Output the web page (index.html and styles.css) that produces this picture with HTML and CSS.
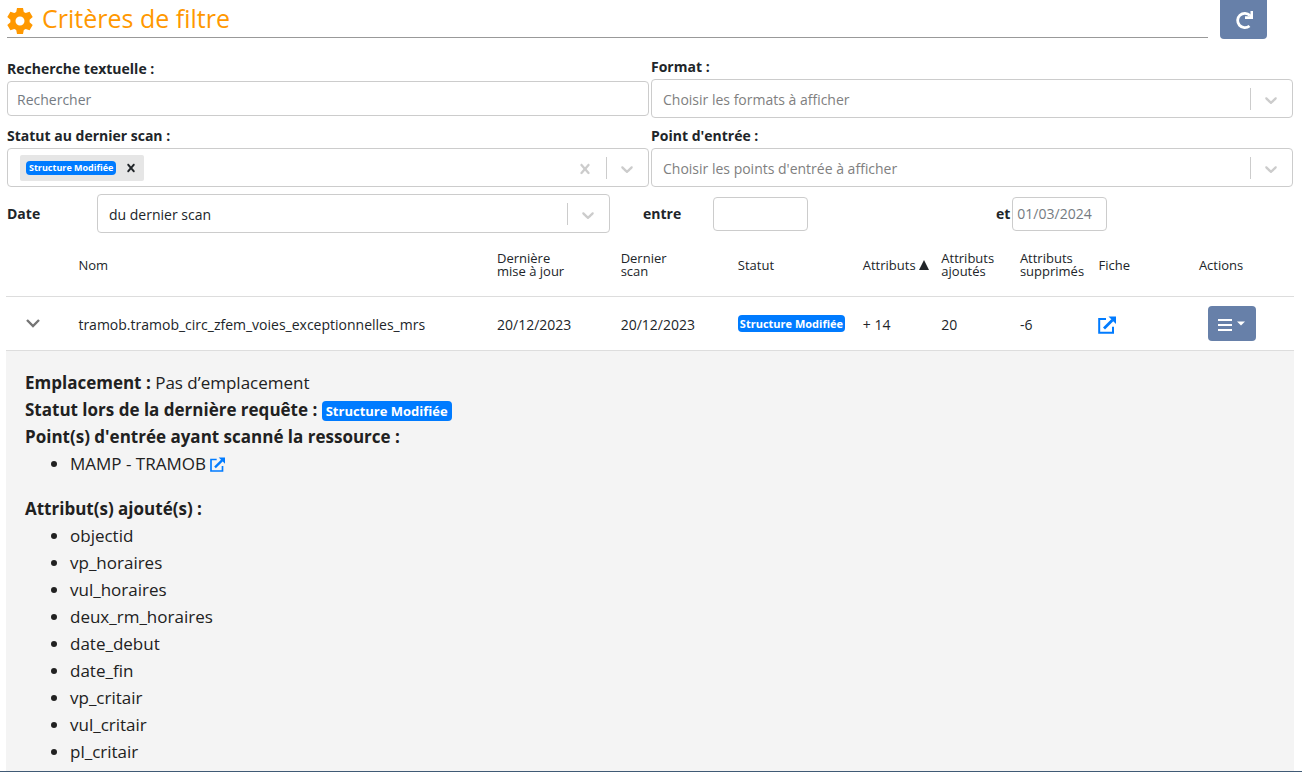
FILE: index.html
```
<!DOCTYPE html>
<html lang="fr">
<head>
<meta charset="utf-8">
<meta name="viewport" content="width=device-width, initial-scale=1">
<title>Critères de filtre</title>
<link rel="stylesheet" href="styles.css">
</head>
<body>
<svg class="sprite" aria-hidden="true">
  <symbol id="chevron" viewBox="0 0 20 20"><path d="M4.516 7.548c0.436-0.446 1.043-0.481 1.576 0l3.908 3.747 3.908-3.747c0.533-0.481 1.141-0.446 1.574 0 0.436 0.445 0.408 1.197 0 1.615-0.406 0.418-4.695 4.502-4.695 4.502-0.217 0.223-0.502 0.335-0.787 0.335s-0.57-0.112-0.789-0.335c0 0-4.287-4.084-4.695-4.502s-0.436-1.17 0-1.615z"/></symbol>
  <symbol id="cross" viewBox="0 0 20 20"><path d="M14.348 14.849c-0.469 0.469-1.229 0.469-1.697 0l-2.651-3.030-2.651 3.029c-0.469 0.469-1.229 0.469-1.697 0-0.469-0.469-0.469-1.229 0-1.697l2.758-3.15-2.759-3.152c-0.469-0.469-0.469-1.228 0-1.697s1.228-0.469 1.697 0l2.652 3.031 2.651-3.031c0.469-0.469 1.228-0.469 1.697 0s0.469 1.229 0 1.697l-2.758 3.152 2.758 3.15c0.469 0.469 0.469 1.229 0 1.698z"/></symbol>
  <symbol id="external" viewBox="0 0 18 18"><path d="M8 3H1.200v13.800h13.800v-6" fill="none" stroke="currentColor" stroke-width="2"/><path d="M6 12.500l8.500-8.500" fill="none" stroke="currentColor" stroke-width="2.800"/><path d="M10.500 .5H18V8z"/></symbol>
</svg>
<div class="page">
  <header class="top">
    <h1 class="title">
      <svg class="gear" viewBox="0 0 26 26" aria-hidden="true"><path fill-rule="evenodd" d="M10 0h6l.8 4 1.900 1.100L22.600 3.800l3.100 5.200-3.100 2.700v2.600l3.100 2.700-3.100 5.200-3.900-1.300-1.900 1.100-.8 4h-6l-.8-4-1.900-1.100-3.900 1.300L.3 17l3.100-2.700v-2.600L.3 9l3.100-5.200 3.900 1.300L9.200 4zM13 8.500a4.500 4.500 0 1 0 0 9a4.500 4.500 0 1 0 0-9z"/></svg>
      Critères de filtre
    </h1>
    <button class="btn refresh" type="button" aria-label="Actualiser">
      <svg viewBox="0 0 20 20" aria-hidden="true"><path d="M16 5.500A7.200 7.200 0 1 0 15.500 16" fill="none" stroke="currentColor" stroke-width="2.800"/><path d="M19 1v8h-8V6.200h4.500L16.500 4.500V1z"/></svg>
    </button>
  </header>

  <form class="filters">
    <div class="field">
      <label for="search">Recherche textuelle :</label>
      <input class="input" id="search" type="text" placeholder="Rechercher">
    </div>
    <div class="field">
      <label for="format">Format :</label>
      <div class="control muted">
        <select id="format"><option>Choisir les formats à afficher</option></select>
        <span class="separator"></span><svg class="arrow" aria-hidden="true"><use href="#chevron"/></svg>
      </div>
    </div>
    <div class="field">
      <label id="status-label">Statut au dernier scan :</label>
      <div class="control" role="group" aria-labelledby="status-label">
        <div class="values">
          <span class="chip"><span class="badge small">Structure Modifiée</span><button class="remove" type="button" aria-label="Retirer"><svg aria-hidden="true"><use href="#cross"/></svg></button></span>
        </div>
        <button class="icon" type="button" aria-label="Effacer"><svg class="arrow" aria-hidden="true"><use href="#cross"/></svg></button>
        <span class="separator"></span>
        <button class="icon" type="button" aria-label="Ouvrir"><svg class="arrow" aria-hidden="true"><use href="#chevron"/></svg></button>
      </div>
    </div>
    <div class="field">
      <label for="entry">Point d'entrée :</label>
      <div class="control muted">
        <select id="entry"><option>Choisir les points d'entrée à afficher</option></select>
        <span class="separator"></span><svg class="arrow" aria-hidden="true"><use href="#chevron"/></svg>
      </div>
    </div>
    <div class="dates">
      <label for="date-kind">Date</label>
      <div class="control kind">
        <select id="date-kind"><option>du dernier scan</option></select>
        <span class="separator"></span><svg class="arrow" aria-hidden="true"><use href="#chevron"/></svg>
      </div>
      <label for="from">entre</label>
      <input class="input date" id="from" type="text">
      <div class="until">
        <label for="to">et</label>
        <input class="input date" id="to" type="text" placeholder="01/03/2024">
      </div>
    </div>
  </form>

  <div class="results">
  <table>
    <colgroup><col class="c-toggle"><col class="c-name"><col class="c-date"><col class="c-scan"><col class="c-status"><col class="c-attr"><col class="c-attr"><col class="c-attr"><col class="c-link"><col></colgroup>
    <thead>
      <tr><th></th><th>Nom</th><th>Dernière<br>mise à jour</th><th>Dernier<br>scan</th><th>Statut</th><th>Attributs <svg class="sort" viewBox="0 0 10 10" aria-hidden="true"><path d="M5 0l5 10H0z"/></svg></th><th>Attributs<br>ajoutés</th><th>Attributs<br>supprimés</th><th>Fiche</th><th>Actions</th></tr>
    </thead>
    <tbody>
      <tr>
        <td><button class="icon expand" type="button" aria-label="Replier"><svg viewBox="0 0 14 9" aria-hidden="true"><path d="M1 1l6 6 6-6" fill="none" stroke="currentColor" stroke-width="2.400"/></svg></button></td>
        <td>tramob.tramob_circ_zfem_voies_exceptionnelles_mrs</td>
        <td>20/12/2023</td><td>20/12/2023</td>
        <td><span class="badge medium">Structure Modifiée</span></td>
        <td>+ 14</td><td>20</td><td>-6</td>
        <td><a class="sheet" href="#" aria-label="Fiche"><svg aria-hidden="true"><use href="#external"/></svg></a></td>
        <td class="actions"><button class="btn menu" type="button" aria-label="Actions"><svg viewBox="0 0 28 14" aria-hidden="true"><path d="M0 2h14M0 7h14M0 12h14" stroke="currentColor" stroke-width="2"/><path d="M19 3.500h8l-4 4z"/></svg></button></td>
      </tr>
    </tbody>
  </table>
  </div>

  <section class="detail">
    <p><strong>Emplacement :</strong> Pas d’emplacement</p>
    <p><strong>Statut lors de la dernière requête :</strong> <span class="badge large">Structure Modifiée</span></p>
    <p><strong>Point(s) d'entrée ayant scanné la ressource :</strong></p>
    <ul class="list entries">
      <li>MAMP - TRAMOB <a class="source" href="#" aria-label="Ouvrir MAMP - TRAMOB"><svg aria-hidden="true"><use href="#external"/></svg></a></li>
    </ul>
    <p><strong>Attribut(s) ajouté(s) :</strong></p>
    <ul class="list">
      <li>objectid</li><li>vp_horaires</li><li>vul_horaires</li><li>deux_rm_horaires</li><li>date_debut</li><li>date_fin</li><li>vp_critair</li><li>vul_critair</li><li>pl_critair</li>
    </ul>
  </section>
  <footer class="strip"></footer>
</div>
</body>
</html>
```
FILE: styles.css
```
* { box-sizing: border-box; }
body { margin: 0; color: #212529; background: #fff; font: 14px/20px "Open Sans", "Noto Sans", sans-serif; }
svg { display: block; fill: currentColor; }
.sprite { display: none; }
button, input, select { font: inherit; color: inherit; }
button { border: 0; padding: 0; cursor: pointer; }
p, ul, h1 { margin: 0; }
.page { display: flex; flex-direction: column; min-height: 100vh; }

.top { display: flex; gap: 12px; padding: 0 35px 0 7px; }
.title { display: flex; flex: 1; align-items: center; gap: 9px; height: 38px; padding-bottom: 2px; border-bottom: 1px solid #999; color: #ff9800; font-size: 25px; font-weight: 400; }
.gear { width: 26px; height: 26px; margin-top: 6px; }
.btn { display: flex; align-items: center; justify-content: center; color: #fff; background: #6780a9; border-radius: 4px; }
.refresh { width: 47px; height: 39px; border-radius: 0 0 4px 4px; }
.refresh svg { width: 20px; height: 20px; }

.filters { display: grid; grid-template-columns: 1fr 1fr; gap: 7px 2px; padding: 17px 9px 0 7px; }
.field { display: flex; flex-direction: column; gap: 1px; align-self: center; }
label { font-weight: 700; font-size: 14px; line-height: 22px; }
.input { height: 35px; width: 100%; padding: 1px 9px 0; border: 1px solid #ccc; border-radius: 4px; background: #fff; }
.input::placeholder { color: #757b82; opacity: 1; }
.control { display: flex; align-items: center; height: 39px; padding-left: 11px; border: 1px solid #ccc; border-radius: 4px; background: #fff; }
.control select { flex: 1; min-width: 0; height: 100%; padding: 2px 0 0; border: 0; appearance: none; background: transparent; }
.muted select { color: #808080; }
.separator { width: 1px; height: 22px; background: #ccc; }
.arrow { width: 20px; height: 20px; margin: 3px 11px 0 10px; color: #ccc; }
.values { flex: 1; }
.icon { background: transparent; }
.chip { display: inline-flex; align-items: center; height: 26px; margin-left: 1px; padding-left: 6px; border-radius: 2px; background: #e6e6e6; }
.remove { padding: 0 5px 0 7px; background: transparent; }
.remove svg { width: 16px; height: 16px; }
.badge { display: inline-block; color: #fff; background: #007bff; border-radius: 4px; font-weight: 700; white-space: nowrap; }
.small { padding: 0 3px; font-size: 9px; line-height: 14px; }
.medium { padding: 0 2px; font-size: 11px; line-height: 17px; vertical-align: top; }
.large { padding: 0 4px; font-size: 13px; line-height: 20px; }
.dates { display: grid; grid-column: 1 / -1; grid-template-columns: 90fr 546fr 70fr 283fr 297fr; align-items: center; }
.kind { margin-right: 33px; }
.date { width: 95px; height: 34px; padding: 0 4px; }
.until { display: flex; align-items: center; gap: 2px; }

.results { padding: 0 8px 0 6px; }
table { width: 100%; border-collapse: collapse; table-layout: fixed; }
.c-toggle { width: 5%; }
.c-name { width: 32.5%; }
.c-date { width: 9.6%; }
.c-scan { width: 9.1%; }
.c-status { width: 9.7%; }
.c-attr { width: 6.1%; }
.c-link { width: 7.8%; }
th { height: 63px; padding: 2px 0 0 8px; border-bottom: 1px solid #ddd; font-size: 13px; line-height: 13px; font-weight: 500; text-align: left; white-space: nowrap; }
td { height: 54px; padding: 3px 0 0 8px; border-bottom: 1px solid #ddd; }
.sort { display: inline-block; width: 10px; height: 10px; }
.expand { padding: 0 12px 4px; vertical-align: middle; }
.expand svg { width: 14px; height: 9px; color: #757575; }
.sheet svg { width: 18px; height: 18px; }
a { color: #007bff; }
.actions { padding: 0 0 0 17px; }
.menu { width: 48px; height: 35px; padding-top: 3px; }
.menu svg { width: 28px; height: 14px; }

.detail { flex: 1; margin: 0 8px 0 6px; padding: 18px 19px 2px; background: #f4f4f4; color: #212121; font-size: 17px; line-height: 27px; }
.list { padding-left: 45px; }
.entries { margin-bottom: 18px; }
.source { display: inline-block; vertical-align: middle; }
.source svg { width: 15px; height: 15px; }
.strip { height: 1px; background: #405a75; }
```
